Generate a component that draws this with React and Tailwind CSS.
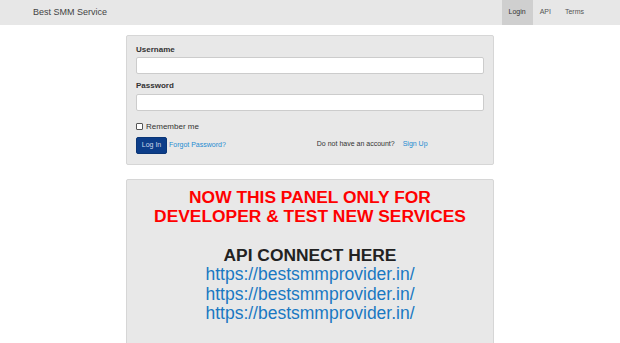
const navItems = [
  { label: 'Login', active: true },
  { label: 'API' },
  { label: 'Terms' },
]

const links = ['https://bestsmmprovider.in/', 'https://bestsmmprovider.in/', 'https://bestsmmprovider.in/']

export default function App() {
  return (
    <div className="min-h-screen bg-white font-['Liberation_Sans',Arial,sans-serif] text-[#333]">
      <header className="h-[25px] bg-[#e7e7e7]">
        <div className="flex h-full items-stretch justify-between pl-[33px] pr-[29px]">
          <span className="flex items-center text-[9px] text-[#444]">Best SMM Service</span>
          <nav className="flex">
            {navItems.map((item) => (
              <span
                key={item.label}
                className={[
                  'flex items-center px-[7px] text-[7px]',
                  item.active ? 'ml-[2px] bg-[#cfcfcf] text-[#333]' : 'text-[#555]',
                ].join(' ')}
              >
                {item.label}
              </span>
            ))}
          </nav>
        </div>
      </header>

      <main className="mx-auto w-[368px] pt-[10px]">
        <div className="rounded-[2px] border border-[#d6d6d6] bg-[#e8e8e8] px-[9px] pt-[8px] pb-[10px]">
          <label className="block text-[8px] font-bold leading-[11px] text-[#333]">Username</label>
          <input className="mt-[2px] block h-[17px] w-full rounded-[2px] border border-[#ccc] bg-white" />
          <label className="mt-[6px] block text-[8px] font-bold leading-[11px] text-[#333]">Password</label>
          <input type="password" className="mt-[3px] block h-[17px] w-full rounded-[2px] border border-[#ccc] bg-white" />
          <div className="mt-[10px] flex h-[11px] items-center gap-[3px] text-[8px] text-[#333]">
            <span className="inline-block h-[7px] w-[7px] rounded-[1px] border border-[#555] bg-white" />
            Remember me
          </div>
          <div className="mt-[5px] flex items-center">
            <button className="h-[17px] w-[31px] rounded-[2px] border border-[#0a3576] bg-[#0c3d89] text-[7px] text-[#cdd8ea]">
              Log In
            </button>
            <span className="ml-[2px] text-[7px] text-[#1d8bd1]">Forgot Password?</span>
            <span className="ml-[91px] -mt-[3px] text-[7px] text-[#333]">Do not have an account?</span>
            <span className="ml-[8px] -mt-[3px] text-[7px] text-[#1d8bd1]">Sign Up</span>
          </div>
        </div>

        <div className="mt-[14px] h-[200px] rounded-[2px] border border-[#d6d6d6] bg-[#e8e8e8] pt-[8px] text-center">
          <p className="text-[17.4px] font-bold leading-[19px] text-[#ff0000]">
            NOW THIS PANEL ONLY FOR
            <br />
            DEVELOPER &amp; TEST NEW SERVICES
          </p>
          <p className="mt-[20px] text-[17.4px] font-bold leading-[19px] text-[#222]">API CONNECT HERE</p>
          {links.map((href, i) => (
            <p key={i} className="text-[17.5px] leading-[19.5px] text-[#1a78c2]">
              {href}
            </p>
          ))}
        </div>
      </main>
    </div>
  )
}
